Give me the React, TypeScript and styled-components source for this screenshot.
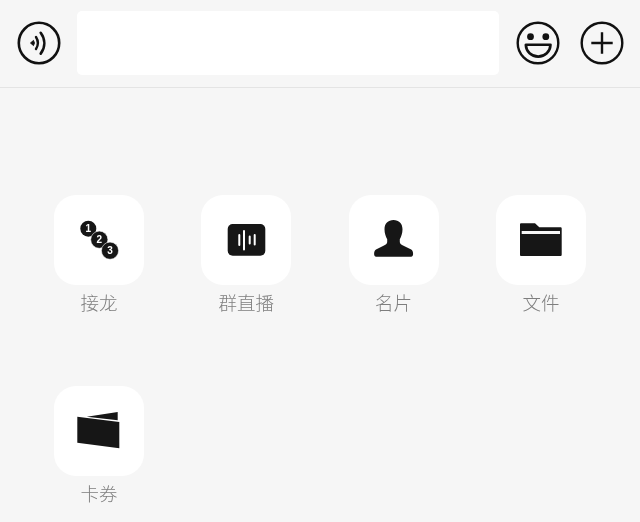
import React from "react";
import styled, { createGlobalStyle } from "styled-components";

const GlobalStyle = createGlobalStyle`
  html, body {
    margin: 0;
    padding: 0;
    background: #f6f6f6;
  }
`;

const Page = styled.div`
  width: 640px;
  height: 522px;
  overflow: hidden;
  background: #f6f6f6;
  font-family: "Noto Sans CJK SC", "Liberation Sans", sans-serif;
`;

const InputBar = styled.div`
  height: 88px;
  box-sizing: border-box;
  border-bottom: 1px solid #e4e4e4;
  display: flex;
  align-items: center;
  padding: 0 16px 1px 17px;
`;

const RoundIcon = styled.svg<{ $gap?: number }>`
  width: 44px;
  height: 44px;
  flex: none;
  margin-left: ${props => props.$gap || 0}px;
`;

const TextBox = styled.div`
  width: 422px;
  height: 64px;
  margin-left: 16px;
  background: #ffffff;
  border-radius: 5px;
  flex: none;
`;

const Grid = styled.div`
  display: grid;
  grid-template-columns: repeat(4, 90px);
  column-gap: 57.3px;
  row-gap: 71px;
  padding: 107px 0 0 54px;
`;

const Item = styled.div`
  display: flex;
  flex-direction: column;
  align-items: center;
`;

const Tile = styled.div`
  width: 90px;
  height: 90px;
  background: #ffffff;
  border-radius: 22px;
`;

const TileIcon = styled.svg`
  display: block;
  width: 90px;
  height: 90px;
  will-change: opacity;
`;

const Label = styled.div`
  margin-top: 6px;
  height: 24px;
  line-height: 23px;
  font-size: 18.5px;
  font-weight: 300;
  color: #7e7e7e;
  white-space: nowrap;
  will-change: opacity;
`;

const Num = styled.text`
  font-family: "Liberation Sans", sans-serif;
  font-size: 10px;
  font-weight: 700;
  fill: #ffffff;
  text-anchor: middle;
`;

const INK = "#161616";

const VoiceIcon = () => (
  <RoundIcon viewBox="0 0 44 44" fill="none" stroke="#111" strokeWidth="2.6">
    <circle cx="22" cy="22" r="20.2" />
    <path d="M13.500 22l3-2.600 .9 2.600-.9 2.600z" fill="#111" stroke="#111" strokeWidth="1" />
    <path d="M19 16c2.400 3.800 2.400 8.200 0 12" strokeWidth="2.400" strokeLinecap="round" />
    <path d="M23.700 11.800c4.800 6.500 4.800 14.400 0 20.800" strokeWidth="2.600" strokeLinecap="round" />
  </RoundIcon>
);

const SmileIcon = () => (
  <RoundIcon $gap={17} viewBox="0 0 44 44" fill="none" stroke="#111" strokeWidth="2.4">
    <circle cx="22" cy="22" r="20.3" />
    <circle cx="14.500" cy="15.700" r="3.400" fill="#111" stroke="none" />
    <circle cx="29.800" cy="15.700" r="3.400" fill="#111" stroke="none" />
    <path d="M9.800 23.800h24.700c-.4 6.900-5.500 11.800-12.300 11.800s-12-4.900-12.400-11.800z" strokeWidth="2.600" strokeLinejoin="round" />
  </RoundIcon>
);

const PlusIcon = () => (
  <RoundIcon $gap={20} viewBox="0 0 44 44" fill="none" stroke="#111" strokeWidth="2.4">
    <circle cx="22" cy="22" r="20.3" />
    <path d="M11.300 22h21.400M22 11.300v21.400" />
  </RoundIcon>
);

const RelayIcon = () => (
  <TileIcon viewBox="0 0 90 90">
    <circle cx="34.300" cy="33.700" r="8" fill={INK} />
    <circle cx="45.300" cy="44.700" r="8.600" fill={INK} stroke="#fff" strokeWidth="0.6" />
    <circle cx="56" cy="55.700" r="8.600" fill={INK} stroke="#fff" strokeWidth="0.6" />
    <Num x="34.300" y="37.200">1</Num>
    <Num x="45.300" y="48.200">2</Num>
    <Num x="56" y="59.200">3</Num>
  </TileIcon>
);

const LiveIcon = () => (
  <TileIcon viewBox="0 0 90 90">
    <rect x="26.700" y="29" width="37.600" height="31.700" rx="5" fill={INK} />
    <path
      d="M38.300 40v10M43 36v18.500M48.700 41.500v7M53.700 40v9.500"
      stroke="#fff"
      strokeWidth="2"
      strokeLinecap="round"
    />
  </TileIcon>
);

const PersonIcon = () => (
  <TileIcon viewBox="0 0 90 90">
    <path
      d="M44.500 25c-5.400 0-9 3.500-9 9.200 0 4 1.300 7.500 2.700 10v2.800c0 1.500-1.200 2.500-3.200 3.400L27 54.600c-1.300.8-1.900 2.600-1.900 4.400 0 1.500.8 2.700 2 2.700h35c1.200 0 2-1.200 2-2.700 0-1.800-.6-3.600-1.900-4.400L54 50.400c-2-.9-3.200-1.900-3.200-3.400v-2.800c1.400-2.500 2.700-6 2.700-10 0-5.700-3.600-9.200-9-9.200z"
      fill={INK}
    />
  </TileIcon>
);

const FolderIcon = () => (
  <TileIcon viewBox="0 0 90 90">
    <path
      d="M24 29.500c0-.8.500-1.200 1.300-1.200h13.700l4.300 4h21.100c.8 0 1.300.5 1.300 1.300v26.100c0 .8-.5 1.300-1.300 1.300H25.300c-.8 0-1.300-.5-1.300-1.300z"
      fill={INK}
    />
    <rect x="25.700" y="36" width="38.300" height="3" fill="#f6f6f6" />
  </TileIcon>
);

const CardIcon = () => (
  <TileIcon viewBox="0 0 90 90">
    <path d="M32.700 30.700L63.700 26V34.300z" fill={INK} />
    <path d="M23.300 30.700L65.300 36V62.300L23.300 56.700z" fill={INK} />
  </TileIcon>
);

const items = [
  { label: "接龙", icon: <RelayIcon /> },
  { label: "群直播", icon: <LiveIcon /> },
  { label: "名片", icon: <PersonIcon /> },
  { label: "文件", icon: <FolderIcon /> },
  { label: "卡券", icon: <CardIcon /> },
];

const App = () => {
  return (
    <Page>
      <GlobalStyle />
      <InputBar>
        <VoiceIcon />
        <TextBox />
        <SmileIcon />
        <PlusIcon />
      </InputBar>
      <Grid>
        {items.map(item => (
          <Item key={item.label}>
            <Tile>{item.icon}</Tile>
            <Label>{item.label}</Label>
          </Item>
        ))}
      </Grid>
    </Page>
  );
};

export default App;
